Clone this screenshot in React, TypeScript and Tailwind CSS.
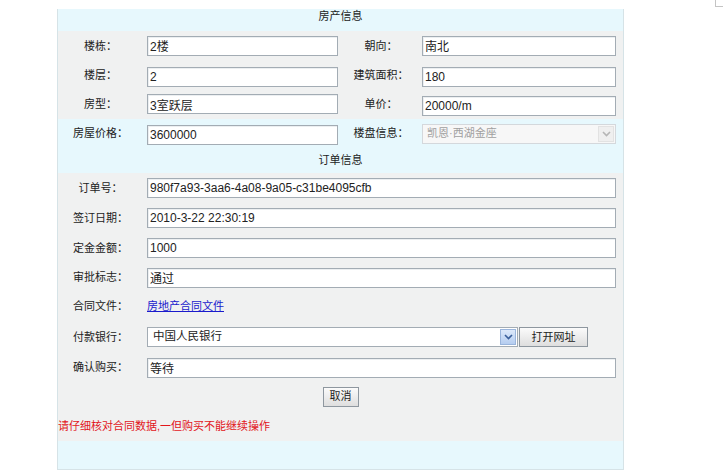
import React from 'react';

const inputCls =
  'h-[20px] border border-[#a3acb4] bg-white px-[2px] text-[12px] text-[#222] outline-none shadow-[inset_1px_1px_0_#eceff1]';

const UpperRow: React.FC<{
  l1: string;
  v1: string;
  l2: string;
  right: React.ReactNode;
  h: string;
  bg: string;
}> = ({ l1, v1, l2, right, h, bg }) => (
  <div className={`flex items-center ${h} ${bg}`}>
    <div className="w-[85px] text-center text-[11px] text-[#222]">{l1}</div>
    <div className="w-[199px] pl-[4px]">
      <input readOnly defaultValue={v1} className={`${inputCls} w-[191px]`} />
    </div>
    <div className="w-[78px] text-center text-[11px] text-[#222]">{l2}</div>
    <div className="pl-[2px]">{right}</div>
  </div>
);

const LowerRow: React.FC<{ label: string; h?: string; children: React.ReactNode }> = ({
  label,
  h = 'h-[30px]',
  children,
}) => (
  <div className={`flex items-center ${h}`}>
    <div className="w-[85px] text-center text-[11px] text-[#222]">{label}</div>
    <div className="flex items-center pl-[4px]">{children}</div>
  </div>
);

const Chevron = ({ color }: { color: string }) => (
  <svg width="9" height="6" viewBox="0 0 9 6" fill="none">
    <path d="M1 1l3.5 3.5L8 1" stroke={color} strokeWidth="1.6" />
  </svg>
);

export default function App() {
  return (
    <div className="relative w-[723px] h-[475px] bg-white overflow-hidden font-[family-name:'Liberation_Sans','Noto_Sans_CJK_SC',sans-serif]">
      {/* stray corner mark */}
      <div className="absolute left-[715px] top-0 w-[8px] h-[7px] border-l border-b border-[#c4c4c4]" />

      <div className="ml-[57px] pt-[9px]">
        <div className="w-[567px] border-l border-r border-b border-[#d6e3e7]">
          {/* 房产信息 */}
          <div className="h-[22px] bg-[#e7f8fd] text-center text-[11px] text-[#222] leading-[13px] pt-[1px]">
            房产信息
          </div>
          <UpperRow
            l1="楼栋："
            v1="2楼"
            l2="朝向："
            h="h-[30px]"
            bg="bg-[#f0f1f1]"
            right={<input readOnly defaultValue="南北" className={`${inputCls} w-[194px]`} />}
          />
          <UpperRow
            l1="楼层："
            v1="2"
            l2="建筑面积："
            h="h-[29px]"
            bg="bg-[#f0f1f1]"
            right={<input readOnly defaultValue="180" className={`${inputCls} w-[194px]`} />}
          />
          <UpperRow
            l1="房型："
            v1="3室跃层"
            l2="单价："
            h="h-[29px]"
            bg="bg-[#f0f1f1]"
            right={<input readOnly defaultValue="20000/m" className={`${inputCls} w-[194px]`} />}
          />
          <UpperRow
            l1="房屋价格："
            v1="3600000"
            l2="楼盘信息："
            h="h-[29px]"
            bg="bg-[#e7f8fd]"
            right={
              <div className="flex h-[20px] w-[194px] items-center justify-between border border-[#d4d8dc] bg-[#f7f7f7] pl-[4px] pr-[1px]">
                <span className="text-[11px] text-[#a0a0a0]">凯恩·西湖金座</span>
                <span className="flex h-[16px] w-[16px] items-center justify-center border border-[#e2e2e2] bg-[#efefef]">
                  <Chevron color="#b5b5b5" />
                </span>
              </div>
            }
          />

          {/* 订单信息 */}
          <div className="flex h-[25px] items-center justify-center bg-[#e7f8fd] text-[11px] text-[#222]">
            订单信息
          </div>

          <div className="bg-[#f0f1f1]">
            <LowerRow label="订单号：">
              <input readOnly defaultValue="980f7a93-3aa6-4a08-9a05-c31be4095cfb" className={`${inputCls} w-[469px]`} />
            </LowerRow>
            <LowerRow label="签订日期：">
              <input readOnly defaultValue="2010-3-22 22:30:19" className={`${inputCls} w-[469px]`} />
            </LowerRow>
            <LowerRow label="定金金额：">
              <input readOnly defaultValue="1000" className={`${inputCls} w-[469px]`} />
            </LowerRow>
            <LowerRow label="审批标志：" h="h-[29px]">
              <input readOnly defaultValue="通过" className={`${inputCls} w-[469px] text-[11px]`} />
            </LowerRow>
            <LowerRow label="合同文件：" h="h-[29px]">
              <a href="#" className="text-[11px] text-[#1a1acc] underline">
                房地产合同文件
              </a>
            </LowerRow>
            <LowerRow label="付款银行：" h="h-[32px]">
              <div className="flex h-[20px] w-[371px] items-center justify-between border border-[#a3acb4] bg-white pl-[5px] pr-[1px]">
                <span className="text-[11.5px] text-[#222]">中国人民银行</span>
                <span className="flex h-[16px] w-[16px] items-center justify-center border border-[#9ab5dc] bg-gradient-to-b from-[#dde9fa] to-[#b5cdf0]">
                  <Chevron color="#3a5f9a" />
                </span>
              </div>
              <button className="ml-[1px] h-[20px] w-[69px] border border-[#8e979f] bg-gradient-to-b from-[#fbfbfb] to-[#dedede] text-[11px] text-[#222]">
                打开网址
              </button>
            </LowerRow>
            <LowerRow label="确认购买：" h="h-[29px]">
              <input readOnly defaultValue="等待" className={`${inputCls} w-[469px] text-[11px]`} />
            </LowerRow>
            <div className="flex h-[29px] items-center justify-center">
              <button className="h-[20px] w-[36px] border border-[#8e979f] bg-gradient-to-b from-[#fbfbfb] to-[#dedede] text-[11px] text-[#222]">
                取消
              </button>
            </div>
            <div className="flex h-[30px] items-center text-[11px] text-[#e2161c]">
              请仔细核对合同数据,一但购买不能继续操作
            </div>
          </div>
          <div className="h-[28px] bg-[#e7f8fd]" />
        </div>
      </div>
    </div>
  );
}
